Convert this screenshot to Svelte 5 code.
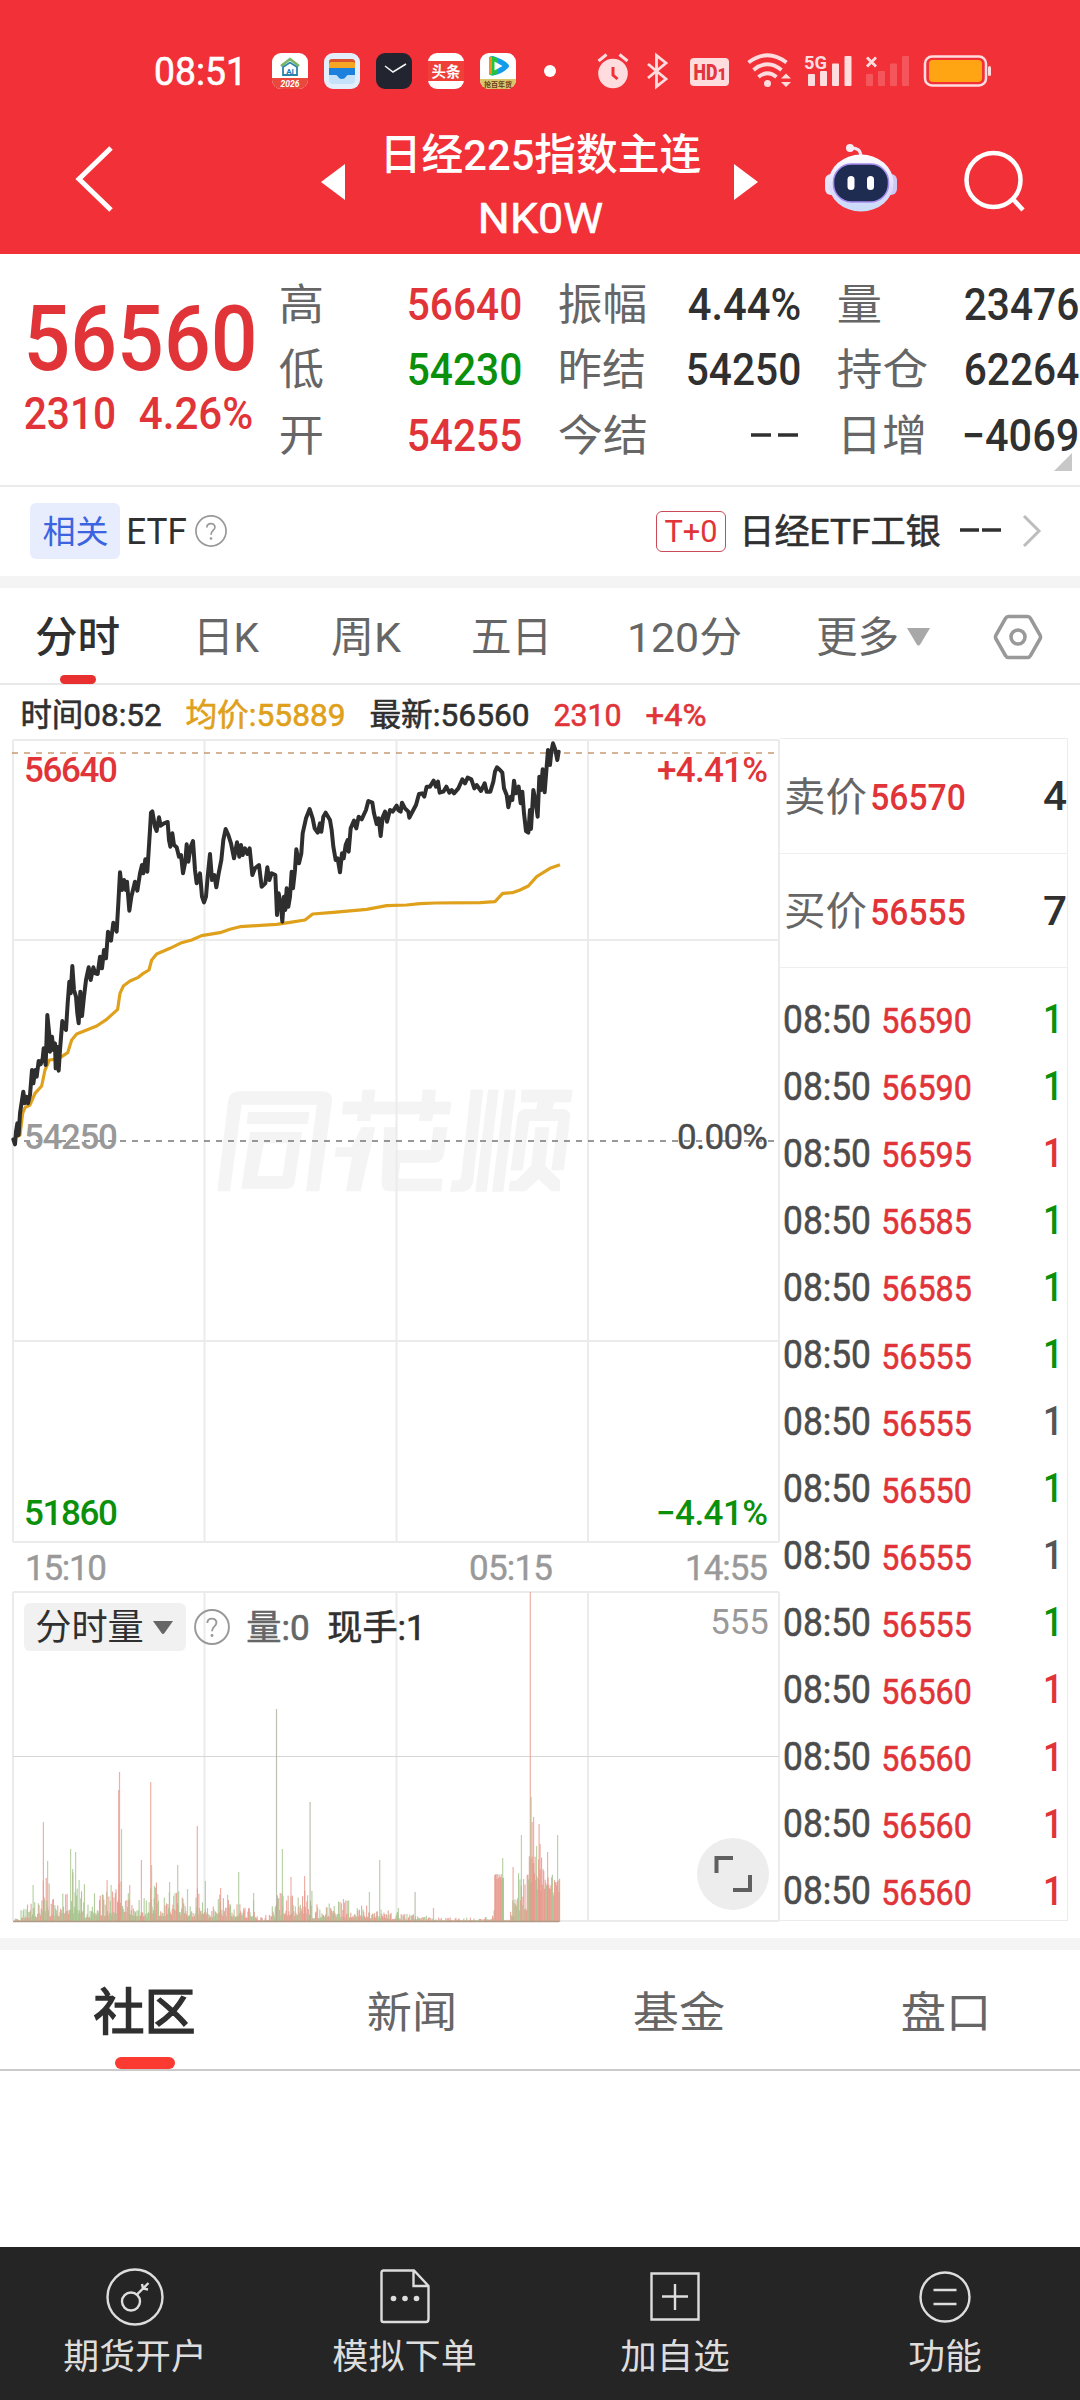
<script>
  // Quote table: label, value, tone, label width, value width; three pairs per row
  const quote = [
    [['高', '56640', 'up', 41, 111], ['振幅', '4.44%', 'ink', 85, 109], ['量', '23476', 'ink', 41, 111]],
    [['低', '54230', 'down', 41, 111], ['昨结', '54250', 'ink', 84, 111], ['持仓', '62264', 'ink', 87, 111]],
    [['开', '54255', 'up', 41, 111], ['今结', '--', 'ink', 86, 0], ['日增', '−4069', 'ink', 86, 113]]
  ];

  const periods = [
    ['日K', 62], ['周K', 66], ['五日', 77], ['120分', 111], ['更多', 79]
  ];

  const trades = [
    ['56590', 'down'], ['56590', 'down'], ['56595', 'up'], ['56585', 'down'], ['56585', 'down'],
    ['56555', 'down'], ['56555', 'flat'], ['56550', 'down'], ['56555', 'flat'], ['56555', 'down'],
    ['56560', 'up'], ['56560', 'up'], ['56560', 'up'], ['56560', 'up']
  ];

  // Intraday series, three units per pixel
  const price = '40,1228 45,1243 48,1205 52,1180 56,1215 60,1150 66,1110 70,1085 74,1120 79,1100 84,1120 90,1095 96,1020 100,1060 106,1020 110,1040 116,993 122,1003 128,985 131,955 137,1005 142,855 148,915 150,965 156,920 160,960 165,940 167,1015 171,950 176,1022 180,960 187,873 192,890 198,900 203,820 208,755 212,790 217,708 222,780 228,800 232,850 236,880 241,785 246,858 252,800 258,750 266,712 272,750 280,712 286,730 293,732 300,680 306,715 312,660 318,685 324,605 333,632 340,578 350,605 355,520 360,427 366,480 372,450 378,480 381,455 388,542 394,500 405,455 412,482 420,430 426,405 430,430 436,388 442,425 450,300 453,248 457,244 465,290 470,303 477,262 482,287 492,280 503,276 507,330 511,350 517,310 522,345 530,352 537,380 543,375 549,430 556,395 560,343 565,395 572,350 579,333 585,420 590,460 600,430 606,500 612,517 618,500 623,440 630,372 636,450 643,435 649,472 656,430 664,390 670,330 677,297 685,315 693,340 702,385 711,337 718,380 723,345 728,375 735,355 742,372 749,355 757,435 765,415 777,405 785,470 796,460 802,412 808,450 815,430 826,435 831,555 836,490 842,520 847,575 852,500 856,540 860,475 865,530 870,500 875,425 879,475 885,420 889,358 897,400 904,370 908,310 918,265 929,237 938,265 944,295 953,308 960,280 964,305 970,260 977,248 990,270 995,300 1000,350 1007,390 1013,385 1020,427 1026,370 1031,385 1037,345 1043,330 1046,365 1052,295 1062,272 1069,295 1076,260 1085,268 1098,240 1105,213 1117,218 1122,250 1130,282 1136,265 1142,318 1148,262 1155,245 1161,275 1170,240 1178,245 1190,227 1195,240 1202,245 1206,218 1215,235 1225,245 1228,263 1240,240 1248,225 1257,192 1266,190 1273,200 1280,170 1290,170 1301,152 1308,170 1314,155 1319,188 1330,185 1339,170 1348,188 1355,180 1362,190 1375,175 1387,148 1395,160 1403,143 1414,148 1423,175 1430,165 1443,183 1454,160 1460,185 1471,185 1480,155 1485,125 1491,112 1500,120 1507,128 1512,175 1520,195 1525,232 1532,200 1537,210 1542,152 1548,190 1556,170 1562,220 1567,185 1572,250 1578,303 1585,308 1590,240 1593,297 1600,180 1606,210 1613,260 1618,140 1623,180 1628,118 1634,187 1640,110 1644,60 1650,105 1654,65 1659,40 1666,60 1672,90 1676,65';
  const average = '40,1228 60,1215 68,1150 75,1133 90,1125 105,1090 125,1068 135,1020 148,990 165,988 185,980 203,968 215,930 230,912 260,900 290,888 320,868 353,838 360,790 370,768 390,753 415,742 430,730 447,720 455,690 470,672 510,655 545,638 575,630 605,617 660,608 690,598 720,590 770,587 830,583 870,577 915,570 938,552 1000,547 1100,538 1160,527 1220,525 1260,521 1305,519 1440,518 1485,515 1508,490 1537,488 1560,480 1585,468 1610,440 1650,415 1680,404';

  // Typical height of the volume bars: [until x, height]
  const levels = [
    [20, 3], [30, 16], [41, 18], [49, 38], [60, 22], [68, 32], [73, 44], [84, 32], [92, 17], [105, 24],
    [115, 26], [121, 34], [128, 30], [142, 22], [148, 20], [156, 34], [168, 24], [186, 28], [194, 20],
    [206, 30], [214, 14], [228, 23], [240, 18], [247, 14], [254, 20], [270, 6], [276, 22], [292, 26],
    [304, 24], [312, 28], [326, 15], [340, 18], [362, 18], [385, 15], [400, 10], [426, 7], [492, 4],
    [494, 16], [503, 47], [510, 2], [518, 22], [526, 44], [531, 72], [545, 60], [560, 44]
  ];
  const spikes = [
    [33, 37, 'g'], [43.3, 100, 'r'], [47.5, 61, 'g'], [70.5, 73, 'g'], [72.5, 53, 'g'], [75.5, 70, 'g'],
    [79, 42, 'g'], [107, 42, 'r'], [111, 37, 'g'], [118.6, 132, 'r'], [119.4, 150, 'r'], [121.4, 93, 'g'],
    [129.6, 37, 'r'], [141.3, 62, 'r'], [150.6, 140, 'r'], [151.5, 57, 'g'], [154.3, 36, 'g'],
    [169.5, 40, 'g'], [177.6, 57, 'g'], [187.4, 33, 'g'], [197.2, 96, 'r'], [205.3, 41, 'g'],
    [220.5, 34, 'r'], [238.6, 50, 'g'], [253.5, 29, 'g'], [276.4, 213, 'n'], [282.3, 73, 'g'],
    [290.9, 45, 'r'], [304.5, 46, 'r'], [310, 120, 'n'], [343.4, 23, 'r'], [369.3, 30, 'g'],
    [379.6, 62, 'g'], [398.3, 14, 'g'], [415, 30, 'n'], [433.4, 14, 'r'], [502.6, 64, 'g'],
    [513, 55, 'r'], [521.3, 87, 'g'], [530.2, 330, 'r'], [531, 125, 'g'], [532, 100, 'r'],
    [533.5, 105, 'r'], [536.5, 76, 'g'], [539, 98, 'r'], [540, 78, 'r'], [547.5, 70, 'r'],
    [557.5, 87, 'g']
  ];
  let seed = 41;
  const rand = () => ((seed = (seed * 16807) % 2147483647) / 2147483647);
  const bars = [];
  for (let x = 14; x < 559.5; x += 0.72) {
    const top = levels.find((l) => x < l[0])[1];
    const block = x > 494 && x < 503;
    const heavy = x > 527;
    const k = block ? 0.9 + rand() * 0.12 : heavy ? 0.5 + rand() * 0.6 : 0.25 + rand() ** 2 * 0.95;
    const red = block ? rand() < 0.7 : heavy ? rand() < 0.75 : rand() < 0.52;
    bars.push({ x, h: Math.max(1.5, top * k), c: red ? 'r' : 'g' });
  }
</script>

<!-- Text set to an exact width; the box is as tall as the digits -->
{#snippet fit(t, w, h, cls = '')}
  {@const size = h / 0.711}
  {@const pad = size * 0.05}
  <svg class="fit {cls}" width={w} height={h} viewBox="0 0 {w} {h}">
    <text x={-pad} y={h} font-size={size} textLength={w + pad * 2} lengthAdjust="spacingAndGlyphs">{t}</text>
  </svg>
{/snippet}

{#snippet help(size)}
  <svg class="help" width={size} height={size} viewBox="0 0 34 34">
    <circle cx="17" cy="17" r="16" />
    <path d="M12.6 13.2c.2-5.6 8.9-5.2 8.6-.2-.2 3.4-4.2 3.6-4.2 8" />
    <circle class="pt" cx="17" cy="25" r="1.4" />
  </svg>
{/snippet}

<div class="page">
  <header>
    <div class="status">
      {@render fit('08:51', 89, 27, 'white semi')}
      <div class="apps">
        <svg width="36" height="36" viewBox="0 0 36 36">
          <rect width="36" height="36" rx="9" fill="#fff" />
          <path d="M0 25h36v2a9 9 0 0 1-9 9H9a9 9 0 0 1-9-9z" fill="#e9483c" />
          <path d="M9 13l9-7 9 7" fill="none" stroke="#79b661" stroke-width="2.5" />
          <path d="M11 14v8h14v-8l-7-4.5z" fill="none" stroke="#2a86a8" stroke-width="1.8" />
          <text x="18" y="20.5" font-size="8" font-weight="700" fill="#1c78b8" text-anchor="middle">AI</text>
          <text x="18" y="33.5" font-size="8.5" font-weight="700" font-style="italic" fill="#fff" text-anchor="middle">2026</text>
        </svg>
        <svg width="36" height="36" viewBox="0 0 36 36">
          <rect width="36" height="36" rx="9" fill="#e2eefb" />
          <rect x="5" y="6" width="26" height="12" rx="3" fill="#d9542f" />
          <path d="M5 11q0-2 2-2h22q2 0 2 2v8H5z" fill="#f5a623" />
          <path d="M5 15h26v8h-7c-2 0-2 4-6 4s-4-4-6-4H5z" fill="#1c80dc" />
          <path d="M5 22h7c2 0 2 4 6 4s4-4 6-4h7v5q0 4-4 4H9q-4 0-4-4z" fill="#c6e2fa" />
        </svg>
        <svg width="36" height="36" viewBox="0 0 36 36">
          <rect width="36" height="36" rx="9" fill="#22242f" />
          <path d="M9 13l8 6 13-8" fill="none" stroke="#f4f4f4" stroke-width="1.5" />
        </svg>
        <svg width="36" height="36" viewBox="0 0 36 36">
          <rect width="36" height="36" rx="9" fill="#fff" />
          <rect y="8" width="36" height="20" fill="#ee4038" />
          <text x="18" y="23.5" font-size="14.5" font-weight="700" fill="#fff" text-anchor="middle">头条</text>
        </svg>
        <svg width="36" height="36" viewBox="0 0 36 36">
          <rect width="36" height="36" rx="9" fill="#fff" />
          <path d="M0 26h36v1a9 9 0 0 1-9 9H9a9 9 0 0 1-9-9z" fill="#d9c56a" />
          <path d="M9 5.5q0-3 4-2.5 10 3 15 8 2 2 0 4-6 6-15 7.5-4 .5-4-3z" fill="#149bea" />
          <path d="M9 6q0-3 4-2.5l5 2v15l-5 1.8q-4 .5-4-3z" fill="#22c33f" />
          <path d="M9 6q0-2 3-2.5v18q-3 0-3-3z" fill="#f79020" />
          <path d="M14.5 8.5l8 4.5-8 4.5z" fill="#fff" />
          <text x="18" y="33.5" font-size="7" font-weight="700" fill="#6a3a1c" text-anchor="middle">抢百年货</text>
        </svg>
      </div>
      <i class="dot"></i>
      <svg width="400" height="40" viewBox="592 51 400 40">
        <g fill="#ffdcde" stroke="#ffdcde">
          <circle cx="613" cy="73.500" r="14.8" stroke="none" />
          <path d="M598.5 61l8-6.5M627.5 61l-8-6.5" fill="none" stroke-width="3" />
          <path d="M613 67v8l4.500 4" fill="none" stroke="#f13038" stroke-width="3" />
          <path d="M648 64l18 15-9.5 7.5V55.5l9.5 7.500-18 15" fill="none" stroke-width="2.8" />
          <rect x="690" y="58" width="39" height="28" rx="4" stroke="none" />
          <path d="M748.5 62.5q19-14.5 38 0M753.5 70q14-11.5 28 0M758.5 77q9-7.5 18 0" fill="none" stroke-width="3.8" />
          <circle cx="767.5" cy="83.5" r="3.500" stroke="none" />
          <path d="M781 78.5l5-5 5 5zM781 82l5 5 5-5z" stroke="none" />
          <g stroke="none">
            <rect x="808" y="74" width="7" height="12" rx="1" /><rect x="820" y="71" width="7" height="15" rx="1" />
            <rect x="832" y="63.5" width="7" height="22.5" rx="1" /><rect x="844.5" y="56" width="7" height="30" rx="1" />
          </g>
          <g stroke="none" opacity=".22">
            <rect x="866" y="74" width="7" height="12" rx="1" /><rect x="878" y="71" width="7" height="15" rx="1" />
            <rect x="890" y="63.5" width="7" height="22.5" rx="1" /><rect x="902" y="56" width="7" height="30" rx="1" />
          </g>
          <path d="M867 57.5l9 9M876 57.5l-9 9" stroke-width="2.8" />
          <rect x="925" y="56.5" width="61" height="29" rx="7" fill="none" stroke-width="2.5" />
          <rect x="988" y="66" width="3" height="10" rx="1.500" stroke="none" />
        </g>
        <rect x="929" y="60" width="53" height="22" rx="4" fill="#ffa412" />
        <text x="693.5" y="80" font-size="22" font-weight="900" fill="#e2353d" textLength="24" lengthAdjust="spacingAndGlyphs">HD</text>
        <text x="717.5" y="80" font-size="16" font-weight="900" fill="#e2353d">1</text>
        <text x="804" y="69" font-size="19" font-weight="700" fill="#ffdcde" textLength="23" lengthAdjust="spacingAndGlyphs">5G</text>
      </svg>
    </div>
    <div class="titlebar">
      <svg class="back" width="40" height="68" viewBox="0 0 40 68"><path d="M36 3L4 34l32 31" /></svg>
      <svg class="prev" width="24" height="36" viewBox="0 0 24 36"><path d="M24 0v36L0 18z" /></svg>
      <div class="title">
        {@render fit('日经225指数主连', 317, 30.5, 'white med')}
        {@render fit('NK0W', 121, 30.5, 'white semi')}
      </div>
      <svg class="next" width="24" height="36" viewBox="0 0 24 36"><path d="M0 0v36l24-18z" /></svg>
      <svg class="bot" width="74" height="70" viewBox="0 0 74 70">
        <defs>
          <linearGradient id="shell" x1="0" y1="0" x2="0" y2="1">
            <stop offset="0" stop-color="#fff" /><stop offset=".6" stop-color="#dcdcfa" /><stop offset="1" stop-color="#c9dcf8" />
          </linearGradient>
        </defs>
        <path d="M26 4q11-1 11 9" fill="none" stroke="#f3e6f2" stroke-width="3" />
        <circle cx="26" cy="4" r="4" fill="#f6ecf6" />
        <rect x="1" y="30" width="12" height="21" rx="6" fill="#e6e4fa" />
        <rect x="61" y="30" width="12" height="21" rx="6" fill="#cfc8f6" />
        <ellipse cx="37" cy="39" rx="32.5" ry="28.5" fill="url(#shell)" />
        <rect x="9.5" y="20" width="55" height="38" rx="18" fill="#1f2c52" stroke="#a58cf0" stroke-width="1.5" />
        <rect x="23.5" y="32" width="7" height="14" rx="3.5" fill="#fff" />
        <rect x="43" y="32" width="7" height="14" rx="3.5" fill="#fff" />
      </svg>
      <svg class="search" width="62" height="62" viewBox="0 0 62 62">
        <circle cx="29.5" cy="30" r="27" /><path d="M48 48l11 12" />
      </svg>
    </div>
  </header>

  <section class="quote">
    <div class="last">
      {@render fit('56560', 225, 64, 'up med')}
      <div class="delta">
        {@render fit('2310', 88, 32, 'up med')}
        {@render fit('4.26%', 110, 32, 'up med')}
      </div>
    </div>
    <div class="grid">
      {#each quote as row}
        {#each row as [label, value, tone, lw, vw]}
          <div class="k">{@render fit(label, lw, 30.5, 'mid')}</div>
          <div class="v">
            {#if value === '--'}
              <svg class="dash" width="48" height="4" viewBox="0 0 48 4"><path d="M0 2h20M27 2h20" /></svg>
            {:else}
              {@render fit(value, vw, 32, tone + ' med')}
            {/if}
          </div>
        {/each}
      {/each}
    </div>
    <i class="corner"></i>
  </section>

  <section class="etf">
    <div class="tag">{@render fit('相关', 63, 22.5, 'blue')}</div>
    {@render fit('ETF', 57, 26, 'ink')}
    {@render help(32)}
    <div class="t0">{@render fit('T+0', 50, 22, 'up')}</div>
    {@render fit('日经ETF工银', 198, 25, 'ink semi')}
    <svg class="dash" width="42" height="4" viewBox="0 0 42 4"><path d="M0 2h19M22 2h19" /></svg>
    <svg class="more" width="20" height="34" viewBox="0 0 20 34"><path d="M2 2l15 15L2 32" /></svg>
  </section>

  <nav class="periods">
    <div class="item on">{@render fit('分时', 81, 30, 'ink med')}</div>
    {#each periods as [name, w]}
      <div class="item">{@render fit(name, w, 29.5, 'mid')}</div>
    {/each}
    <svg class="caret" width="23" height="18" viewBox="0 0 23 18"><path d="M0 0h23l-9.5 16q-2 3-4 0z" /></svg>
    <svg class="hex" width="50" height="46" viewBox="0 0 50 46">
      <path d="M15.5 2.5h19q2 0 3 1.8l9.5 16.7q1 2 0 4l-9.5 16.7q-1 1.8-3 1.8h-19q-2 0-3-1.8L3 25q-1-2 0-4l9.5-16.7q1-1.8 3-1.8z" />
      <circle cx="25" cy="23" r="7" />
    </svg>
  </nav>

  <div class="info">
    {@render fit('时间08:52', 138, 22.5, 'ink semi')}
    {@render fit('均价:55889', 157, 22.5, 'gold semi')}
    {@render fit('最新:56560', 157, 22.5, 'ink semi')}
    {@render fit('2310', 65, 22.5, 'up semi')}
    {@render fit('+4%', 58, 22.5, 'up semi')}
  </div>

  <div class="board">
    <div class="charts">
      <svg class="chart" width="780" height="861" viewBox="0 730 780 861">
        <g class="mark" transform="translate(200 1070) scale(.33333)">
          <path d="M52 364L84 95Q88 64 118 64H368Q400 66 396 95L358 364H318L350 104H125L90 364z" />
          <path d="M144 126h184l-4 36H140z" />
          <path fill-rule="evenodd" d="M150 186h156l-22 150q-4 20-22 20H124zM192 220l-20 98h76l14-98z" />
          <path d="M430 95h54l4-36h38l-4 36h142l4-36h40l-4 36h50l-4 38h-50l-4 20h-40l4-20H514l-4 20h-40l4-20h-48z" />
          <path d="M484 172h42l-44 192h-44l18-104h-52l4-28h46z" />
          <path d="M552 172h42l-10 68h108l8-68h42l-10 80q-5 26-30 26H600l-4 48h132l-4 38H570q-28 0-25-30z" />
          <path d="M812 59h38l-30 270q-4 36-38 36h-32l6-34h16q10 0 12-14zM864 59h32l-36 306h-34zM914 59h34l-38 306h-34z" />
          <path d="M964 59h154l-5 38h-50l-5 20h32q22 2 20 24l-18 160h-38l20-148H988l-20 148h-36l20-162q4-22 26-22h30l5-20h-50z" />
          <path d="M1006 172h42l-12 116 44 42v34h-26l-38-36-40 36h-50l4-32h20l44-46z" />
        </g>
        <g class="lines">
          <path d="M13 740H779M13 940H779M13 1341H779M13 1542H779M13 740V1542M204.5 740V1542M396.5 740V1542M588 740V1542M779 740V1542" />
        </g>
        <path class="dashed top" d="M12 753H775" />
        <path class="dashed" d="M24 1141H775" />
        <g transform="translate(0 730) scale(.33333)">
          <polyline class="avg" points={average} />
          <polyline class="px" points={price} />
        </g>
        <g class="labels">
          <text class="up" x="24" y="782" textLength="94">56640</text>
          <text class="up" x="657" y="782" textLength="111">+4.41%</text>
          <text class="grey" x="24" y="1149" textLength="94">54250</text>
          <text class="dim thin" x="677" y="1149" textLength="91">0.00%</text>
          <text class="down" x="24" y="1525" textLength="94">51860</text>
          <text class="down" x="656" y="1525" textLength="112">−4.41%</text>
          <text class="grey thin" x="25" y="1580" textLength="82">15:10</text>
          <text class="grey thin" x="469" y="1580" textLength="84">05:15</text>
          <text class="grey thin" x="685" y="1580" textLength="83">14:55</text>
        </g>
      </svg>
      <div class="volume">
        <svg class="chart" width="780" height="332" viewBox="0 1591 780 332">
          <g class="lines">
            <path d="M13 1592H779M13 1921H779M13 1592V1921M204.5 1592V1921M396.5 1592V1921M588 1592V1921M779 1592V1921" />
            <path class="hair" d="M13 1756.5H779" />
          </g>
          {#each bars as b}
            <rect class={b.c} x={b.x} y={1922 - b.h} width="1.1" height={b.h} />
          {/each}
          {#each spikes as [x, h, c]}
            <rect class="{c} spike" x={x - 0.5} y={1922 - h} width="1.2" height={h} />
          {/each}
          <path d="M13 1921.5H559" stroke="#b09a86" stroke-width="1.5" />
        </svg>
        <div class="legend">
          <div class="pick">
            {@render fit('分时量', 105, 25.5, 'ink')}
            <svg width="20" height="13" viewBox="0 0 20 13"><path d="M0 0h20l-8.5 12q-1.5 2-3 0z" fill="#666" /></svg>
          </div>
          {@render help(36)}
          {@render fit('量:0', 60, 25, 'mid semi')}
          {@render fit('现手:1', 95, 25, 'ink semi')}
          {@render fit('555', 55, 25, 'grey')}
        </div>
        <div class="expand">
          <svg width="40" height="40" viewBox="0 0 40 40"><path d="M3.5 19V4H20M37 21v15H20" /></svg>
        </div>
      </div>
    </div>

    <aside>
      <div class="depth">
        {@render fit('卖价', 79, 28.5, 'mid')}{@render fit('56570', 92, 26, 'up med')}{@render fit('4', 20, 29, 'ink med')}
      </div>
      <div class="depth">
        {@render fit('买价', 79, 28.5, 'mid')}{@render fit('56555', 92, 26, 'up med')}{@render fit('7', 20, 29, 'ink med')}
      </div>
      <div class="tape">
        {#each trades as [p, tone]}
          <div class="trade">
            {@render fit('08:50', 84, 27.5, 'dim semi')}{@render fit(p, 87, 25.5, 'up semi')}{@render fit('1', 16, 29, tone + ' med')}
          </div>
        {/each}
      </div>
    </aside>
  </div>

  <nav class="tabs">
    <div class="tab on">{@render fit('社区', 97, 35.5, 'ink strong')}</div>
    <div class="tab">{@render fit('新闻', 86, 31, 'mid')}</div>
    <div class="tab">{@render fit('基金', 88, 31, 'mid')}</div>
    <div class="tab">{@render fit('盘口', 86, 31, 'mid')}</div>
  </nav>

  <footer>
    <div class="act">
      <svg width="60" height="60" viewBox="0 0 60 60">
        <circle cx="30" cy="30" r="27.5" /><circle cx="26" cy="34.5" r="9" />
        <path d="M32 27.5L43.5 16M37 17l1 4.500 5 1" />
      </svg>
      {@render fit('期货开户', 140, 25, 'pale')}
    </div>
    <div class="act">
      <svg width="60" height="60" viewBox="0 0 60 60">
        <path d="M6.5 5.500q0-2 2-2H39L53.500 19v33q0 3-2.500 3H8.500q-2 0-2-2zM38.500 4v15H53" />
        <g class="pts"><circle cx="18.5" cy="31.5" r="2.8" /><circle cx="30" cy="31.5" r="2.8" /><circle cx="41.5" cy="31.5" r="2.8" /></g>
      </svg>
      {@render fit('模拟下单', 141, 25, 'pale')}
    </div>
    <div class="act">
      <svg width="60" height="60" viewBox="0 0 60 60"><path d="M6.5 6.500h47v46h-47zM30 17v26M17 29.500h26" /></svg>
      {@render fit('加自选', 106, 25, 'pale')}
    </div>
    <div class="act">
      <svg width="60" height="60" viewBox="0 0 60 60">
        <circle cx="30" cy="30" r="24.5" /><path d="M18.5 23h23M18.500 37h23" />
      </svg>
      {@render fit('功能', 70, 25, 'pale')}
    </div>
  </footer>
</div>

<style>
  :global(body) { margin: 0; background: #fff; }
  .page {
    width: 1080px; height: 2400px; overflow: hidden; display: flex; flex-direction: column;
    background: #fff; font-family: Roboto, 'Noto Sans CJK SC', sans-serif;
  }
  svg { display: block; flex: none; overflow: visible; }
  .fit, .labels text { fill: currentColor; stroke: currentColor; stroke-width: 0; }
  .white { color: #fff; } .up { color: #e13439; } .down { color: #0a900a; } .ink { color: #303030; }
  .mid { color: #666; } .dim { color: #4c4c4c; } .flat { color: #555; } .grey { color: #999; }
  .gold { color: #dfa01b; } .blue { color: #3d64e0; } .pale { color: #ddd; }
  .med { font-weight: 500; }
  .fit.semi { stroke-width: 0.6; }
  .fit.strong { stroke-width: 1.6; }

  header { height: 254px; background: #f13038; flex: none; }
  .status { height: 72px; padding: 35px 0 0 156px; display: flex; align-items: center; }
  .apps { display: flex; gap: 16px; margin-left: 27px; }
  .dot { width: 12px; height: 12px; border-radius: 50%; background: #fff; margin: 0 36px 0 28px; flex: none; }
  .titlebar { display: flex; align-items: flex-start; padding: 33px 0 0 75px; }
  .back { margin-top: 5px; }
  .back path { fill: none; stroke: #fff; stroke-width: 5; }
  .prev, .next { margin-top: 24px; fill: #fff; }
  .prev { margin-left: 206px; }
  .title { width: 317px; margin: -1px 35px 0 37px; display: flex; flex-direction: column; align-items: center; gap: 32px; }
  .bot { margin: 4px 0 0 66px; }
  .search { margin: 10px 0 0 66px; fill: none; stroke: #fff; stroke-width: 4.5; }

  .quote { position: relative; height: 231px; border-bottom: 2px solid #ebebeb; display: flex; flex: none; margin-bottom: -1px; }
  .last { width: 253px; padding: 52px 0 0 28px; }
  .delta { display: flex; gap: 27px; margin: 27px 0 0 -2px; }
  .grid { display: grid; grid-template-columns: 128px 151px 129px 150px 129px 111px; grid-auto-rows: 65.5px; align-items: center; align-content: start; padding-top: 17px; }
  .v { display: flex; justify-content: flex-end; padding-right: 40px; }
  .v:nth-child(6n) { padding-right: 2px; }
  .dash path { fill: none; stroke: #303030; stroke-width: 3.5; }
  .corner { position: absolute; right: 8px; bottom: 14px; border: 9px solid transparent; border-right-color: #c8c8c8; border-bottom-color: #c8c8c8; }

  .etf { height: 90px; flex: none; display: flex; align-items: center; padding-left: 30px; border-bottom: 12px solid #f4f4f4; }
  .tag { width: 90px; height: 56px; border-radius: 6px; background: #e7edfc; display: flex; align-items: center; justify-content: center; margin-right: 8px; }
  .help { margin-left: 10px; fill: none; stroke: #999; stroke-width: 1.8; }
  .help .pt { fill: #999; stroke: none; }
  .t0 { width: 68px; height: 39px; border: 1.5px solid #c94a55; border-radius: 6px; display: flex; align-items: center; justify-content: center; margin: 0 15px 0 429px; }
  .etf .dash { margin: -3px 20px 0 21px; }
  .more path { fill: none; stroke: #bdbdbd; stroke-width: 3; }

  .periods { height: 95px; flex: none; display: flex; align-items: center; border-bottom: 2px solid #e8e8e8; padding: 2px 0 0 37px; height: 93px; }
  .item { margin-right: 74px; }
  .item.on { position: relative; margin-right: 77px; }
  .item.on::after { content: ''; position: absolute; left: 23px; top: 53px; width: 36px; height: 9px; border-radius: 5px; background: #e83030; }
  .item:nth-child(2) { margin-right: 76px; }
  .item:nth-child(4) { margin-right: 79px; }
  .item:nth-child(5) { margin-right: 78px; }
  .item:nth-child(6) { margin-right: 10px; }
  .caret { fill: #a8a8a8; }
  .hex { margin-left: 63px; fill: none; stroke: #999; stroke-width: 3.6; }

  .info { height: 45px; flex: none; display: flex; gap: 27px; padding: 18px 0 0 22px; box-sizing: border-box; }
  .board { height: 1208px; display: flex; flex: none; border-bottom: 12px solid #f4f4f4; }
  .charts { width: 780px; }
  .lines path { fill: none; stroke: #ebebeb; stroke-width: 2; }
  .lines .hair { stroke: #d6d6d6; stroke-width: 1; }
  .mark { fill: #f4f4f4; }
  .dashed { stroke: #777; stroke-width: 1.6; stroke-dasharray: 6 6; }
  .dashed.top { stroke: #c89b72; }
  .avg { fill: none; stroke: #dfa01b; stroke-width: 9.5; stroke-linejoin: round; }
  .px { fill: none; stroke: #2e2e2e; stroke-width: 12; stroke-linejoin: round; stroke-linecap: round; }
  .labels text { font-size: 35px; font-weight: 500; }
  .labels .thin { font-weight: 400; stroke-width: 0.4; }
  .volume { position: relative; }
  .r { fill: #e8958a; opacity: .85; } .g { fill: #a3c48c; opacity: .85; } .n { fill: #a9ab98; }
  .spike { opacity: .75; }
  .legend { position: absolute; left: 24px; top: 12px; display: flex; align-items: center; width: 743px; }
  .pick { width: 162px; height: 48px; box-sizing: border-box; padding-left: 13px; background: #f1f1f1; border-radius: 6px; display: flex; align-items: center; gap: 11px; }
  .legend .help { margin: 0 18px 0 8px; }
  .legend .ink.semi { margin-left: 21px; }
  .legend .grey { margin: -11px 0 0 auto; }
  .expand { position: absolute; left: 697px; top: 247px; width: 72px; height: 72px; border-radius: 50%; background: #ededed; display: grid; place-items: center; }
  .expand path { fill: none; stroke: #606060; stroke-width: 4; }

  aside { margin-top: 8px; width: 288px; height: 1183px; border: 1px solid #ececec; border-left: 0; box-sizing: border-box; }
  .depth { height: 113.5px; border-bottom: 1px solid #efefef; display: flex; align-items: center; padding: 0 2px 0 6px; }
  .depth .fit:nth-child(2) { margin: 3px auto 0 7px; }
  .tape { padding-top: 17px; }
  .trade { height: 67.05px; display: flex; align-items: center; padding: 0 6px 0 5px; }
  .trade .fit:nth-child(2) { margin: 3px auto 0 14px; }

  .tabs { height: 120px; flex: none; border-bottom: 2px solid #cacaca; display: grid; grid-template-columns: repeat(4, 267px); padding-left: 11px; margin-top: -1px; }
  .tab { position: relative; display: flex; align-items: center; justify-content: center; padding-top: 6px; }
  .tab.on::after { content: ''; position: absolute; left: 104px; bottom: 0; width: 60px; height: 12px; border-radius: 6px; background: #fb3b32; }
  footer { margin-top: auto; height: 153px; background: #252525; display: grid; grid-template-columns: repeat(4, 1fr); flex: none; }
  .act { display: flex; flex-direction: column; align-items: center; gap: 17px; padding: 20px 1px 0 0; }
  .act > svg:first-child { fill: none; stroke: #ddd; stroke-width: 2.4; }
  .act .pts { fill: #ddd; stroke: none; }
</style>
